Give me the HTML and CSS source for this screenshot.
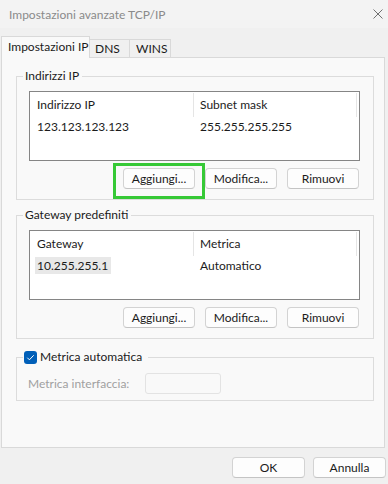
FILE: index.html
```html
<!DOCTYPE html>
<html lang="it">
<head>
  <meta charset="UTF-8">
  <title>Impostazioni avanzate TCP/IP</title>
  <link rel="stylesheet" href="styles.css">
</head>
<body>

<div class="titlebar">
  <span class="title">Impostazioni avanzate TCP/IP</span>
  <svg class="close" width="10" height="10" viewBox="0 0 10 10">
    <path d="M0.5 0.5 L9.5 9.5 M9.5 0.5 L0.5 9.5" stroke="#707070" stroke-width="1" fill="none"/>
  </svg>
</div>

<div class="tabs">
  <div class="tab active">Impostazioni IP</div>
  <div class="tab dns">DNS</div>
  <div class="tab wins">WINS</div>
</div>

<div class="panel">

  <fieldset class="group">
    <legend>Indirizzi IP</legend>
    <div class="list">
      <div class="list-head">
        <div class="col c1">Indirizzo IP</div>
        <div class="col c2">Subnet mask</div>
      </div>
      <div class="list-row">
        <span class="cell c1">123.123.123.123</span>
        <span class="cell c2">255.255.255.255</span>
      </div>
    </div>
    <div class="buttons">
      <button class="btn focused">Aggiungi...</button>
      <button class="btn">Modifica...</button>
      <button class="btn">Rimuovi</button>
    </div>
  </fieldset>

  <fieldset class="group">
    <legend>Gateway predefiniti</legend>
    <div class="list">
      <div class="list-head">
        <div class="col c1">Gateway</div>
        <div class="col c2">Metrica</div>
      </div>
      <div class="list-row">
        <span class="cell c1"><span class="selected">10.255.255.1</span></span>
        <span class="cell c2">Automatico</span>
      </div>
    </div>
    <div class="buttons">
      <button class="btn">Aggiungi...</button>
      <button class="btn">Modifica...</button>
      <button class="btn">Rimuovi</button>
    </div>
  </fieldset>

  <fieldset class="group metric">
    <legend>
      <span class="check">
        <svg width="13" height="13" viewBox="0 0 13 13">
          <path d="M3.3 6.7 L5.4 8.8 L9.7 4.3" stroke="#fff" stroke-width="1" fill="none"/>
        </svg>
      </span>
      Metrica automatica
    </legend>
    <div class="metric-row">
      <span class="metric-label">Metrica interfaccia:</span>
      <span class="input"></span>
    </div>
  </fieldset>

</div>

<div class="footer">
  <button class="btn wide">OK</button>
  <button class="btn wide">Annulla</button>
</div>

</body>
</html>
```

FILE: styles.css
```css
* {
  margin: 0;
  padding: 0;
  box-sizing: border-box;
}

body {
  width: 388px;
  height: 484px;
  overflow: hidden;
  background-color: #f0f0f0;
  font: 400 12px Lato, "Noto Sans", sans-serif;
  color: #1b1b1b;
  white-space: nowrap;
}

.titlebar {
  height: 28px;
  background-color: #f3f3f3;
  display: flex;
  align-items: center;
  justify-content: space-between;
  padding: 0 5px 0 9px;
  color: #8a8a8a;
}

.tabs {
  display: flex;
  align-items: flex-end;
  height: 29px;
  padding-left: 1px;
}

.tab {
  height: 18px;
  line-height: 17px;
  border: 1px solid #d9d9d9;
  border-bottom: none;
  background-color: #f0f0f0;
}

.tab.active {
  height: 22px;
  margin-bottom: -1px;
  line-height: 19px;
  padding-left: 6px;
  width: 89px;
  background-color: #f9f9f9;
  position: relative;
}

.tab.dns {
  width: 41px;
  margin-left: -1px;
  padding-left: 5px;
}

.tab.wins {
  width: 42px;
  margin-left: -1px;
  padding-left: 6px;
}

.panel {
  margin-left: 1px;
  width: 384px;
  height: 391px;
  border: 1px solid #d9d9d9;
  background-color: #f9f9f9;
  padding: 10px 0 0 14px;
}

.group {
  width: 358px;
  border: 1px solid #dcdcdc;
  padding: 7px 13px 10px 12px;
  margin-bottom: 7px;
  min-width: 0;
}

.group legend {
  line-height: 16px;
  margin-left: -6px;
  padding: 0 3px 0 2px;
}

.list {
  height: 70px;
  border: 1px solid #858585;
  background-color: #fff;
}

.list-head {
  display: flex;
  height: 26px;
}

.col {
  margin-top: 1px;
  height: 24px;
  line-height: 24px;
  border-right: 1px solid #e5e5e5;
}

.c1 {
  width: 164px;
  padding-left: 7px;
}

.c2 {
  width: 163px;
  padding-left: 6px;
}

.list-row {
  display: flex;
  height: 17px;
  line-height: 17px;
}

.selected {
  display: inline-block;
  margin-left: -2px;
  padding: 0 3px 0 2px;
  background-color: #e8e8e8;
}

.buttons {
  display: flex;
  justify-content: flex-end;
  gap: 10px;
  margin-top: 7px;
  padding-right: 1px;
}

.btn {
  width: 72px;
  height: 21px;
  border: 1px solid #d3d3d3;
  border-bottom-color: #c4c4c4;
  border-radius: 4px;
  background-color: #fdfdfd;
  font: inherit;
  color: #1b1b1b;
}

.btn.focused {
  position: relative;
}

.btn.focused::after {
  content: "";
  position: absolute;
  left: -11px;
  right: -11px;
  top: -6px;
  bottom: -11px;
  border: 3px solid #36c936;
}

.group.metric {
  margin-top: 10px;
  padding: 8px 13px 6px 11px;
}

.metric legend {
  display: flex;
  align-items: center;
  gap: 3px;
  margin-left: -5px;
  padding: 0 6px 0 1px;
}

.check {
  width: 13px;
  height: 13px;
  border-radius: 3px;
  background-color: #005fb8;
  display: flex;
}

.metric-row {
  display: flex;
  align-items: center;
}

.metric-label {
  width: 117px;
  color: #a0a0a0;
}

.input {
  width: 76px;
  height: 21px;
  border: 1px solid #e3e3e3;
  border-radius: 3px;
}

.footer {
  display: flex;
  justify-content: flex-end;
  gap: 8px;
  padding: 9px 2px 0 0;
}

.btn.wide {
  width: 73px;
}
```
